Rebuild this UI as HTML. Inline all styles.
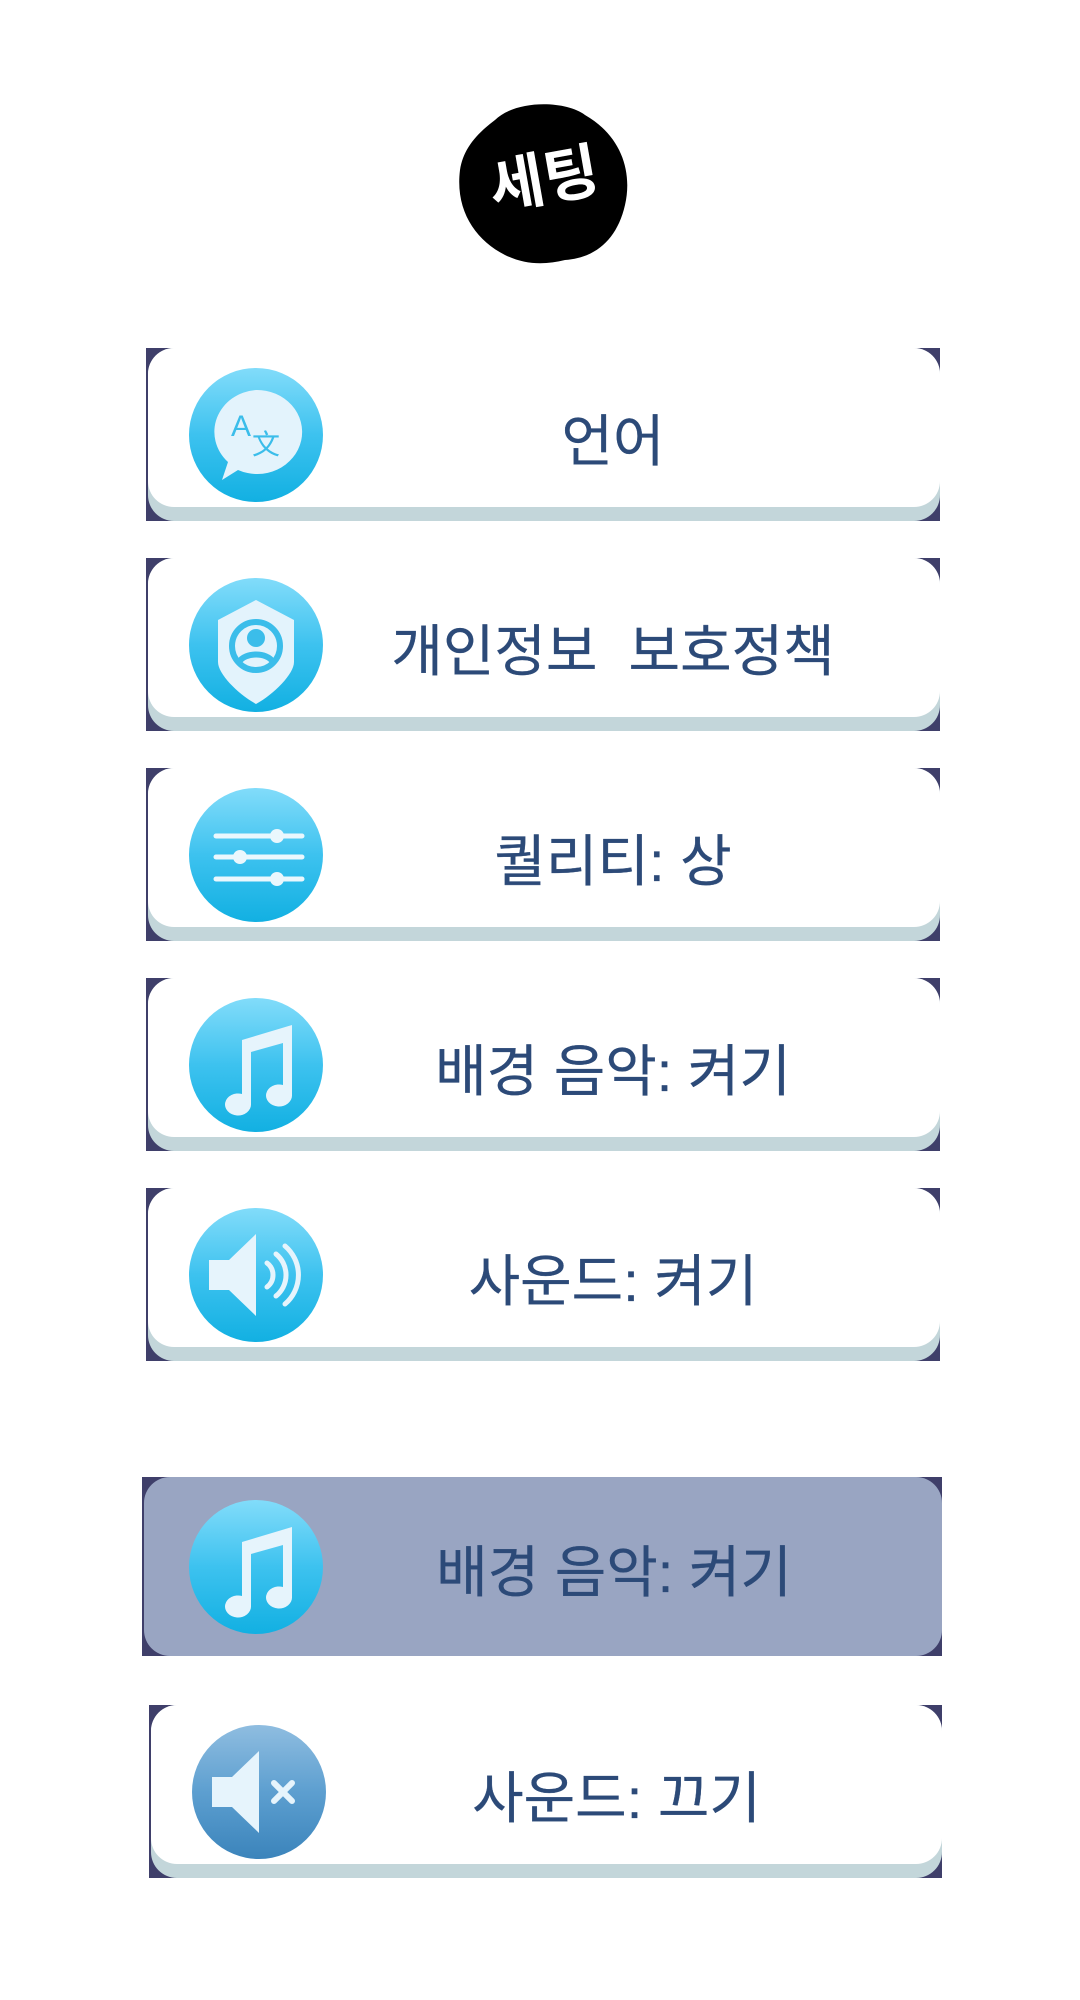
<!DOCTYPE html>
<html><head><meta charset="utf-8"><style>
html,body{margin:0;padding:0;background:#fff;width:1080px;height:2000px;overflow:hidden;position:relative;font-family:"Liberation Sans","Noto Sans CJK KR",sans-serif}
.btn{position:absolute;left:146px;width:794px;height:173px;background:#3f3f6a}
.btn .face{position:absolute;left:2px;top:0;right:0;bottom:0;background:#c3d6da;border-radius:26px}
.btn .face:before{content:"";position:absolute;left:0;right:0;top:0;bottom:14px;background:#fff;border-radius:26px}
.btn.hl .face{background:#99a5c2}
.btn.hl .face:before{display:none}
.ic{position:absolute;left:43px;top:20px;width:134px;height:134px;border-radius:50%;background:linear-gradient(#82dcfa,#3dc2ef 50%,#12b0e2)}
.ic svg{position:absolute;left:0;top:0;width:134px;height:134px}
.ic.mute{background:linear-gradient(#8fbde0,#5d9fd0 50%,#3b84bb)}
.t{position:absolute;left:140px;right:0;top:14px;height:160px;line-height:160px;text-align:center;font-size:56px;color:#2c4a78;-webkit-text-stroke:0.3px #2c4a78}
</style></head><body>
<svg style="position:absolute;left:455px;top:100px" width="180" height="165" viewBox="0 0 180 165">
<path d="M40 20 C60 0 110 0 130 15 C165 35 178 70 170 105 C162 140 140 158 110 160 C90 165 70 165 50 155 C20 140 0 110 5 70 C8 50 20 35 40 20Z" fill="#000"/>
<text x="90" y="100" text-anchor="middle" font-family="'Noto Sans CJK KR',sans-serif" font-weight="bold" font-size="60" fill="#fff" transform="rotate(-10 90 85)">세팅</text>
</svg>

<div class="btn" style="top:348px"><div class="face"></div>
<div class="ic"><svg viewBox="0 0 134 134"><path d="M67 22a45 42 0 1 1 -18 80l-16 10 6-18a45 42 0 0 1 28-72z" fill="#e3f3fc"/><text x="42" y="68" font-size="30" fill="#3bbdea" font-family="Liberation Sans">A</text><text x="63" y="86" font-size="28" fill="#3bbdea" font-family="Noto Sans CJK SC">文</text></svg></div>
<div class="t">언어</div></div>

<div class="btn" style="top:558px"><div class="face"></div>
<div class="ic"><svg viewBox="0 0 134 134"><path d="M67 22l38 20v42c0 12-20 32-38 42-18-10-38-30-38-42V42z" fill="#e3f3fc"/><circle cx="67" cy="68" r="24" fill="none" stroke="#3bbdea" stroke-width="6"/><circle cx="67" cy="60" r="9" fill="#3bbdea"/><path d="M50 84c6-10 28-10 34 0" stroke="#3bbdea" stroke-width="6" fill="none"/></svg></div>
<div class="t">개인정보 &nbsp;보호정책</div></div>

<div class="btn" style="top:768px"><div class="face"></div>
<div class="ic"><svg viewBox="0 0 134 134" stroke="#eaf7fd" stroke-width="5" stroke-linecap="round" fill="#eaf7fd"><line x1="27" y1="48" x2="113" y2="48"/><line x1="27" y1="69" x2="113" y2="69"/><line x1="27" y1="91" x2="113" y2="91"/><circle cx="88" cy="48" r="7" stroke="none"/><circle cx="51" cy="69" r="7" stroke="none"/><circle cx="88" cy="91" r="7" stroke="none"/></svg></div>
<div class="t">퀄리티: 상</div></div>

<div class="btn" style="top:978px"><div class="face"></div>
<div class="ic"><svg viewBox="0 0 134 134"><path d="M53 42l50-15v70a13 11 0 1 1 -9-10V45l-32 9v52a13 11 0 1 1 -9-10z" fill="#e6f4fc"/></svg></div>
<div class="t">배경 음악: 켜기</div></div>

<div class="btn" style="top:1188px"><div class="face"></div>
<div class="ic"><svg viewBox="0 0 134 134"><path d="M20 52h20l27-26v82l-27-26H20z" fill="#e6f4fc"/><path d="M78 55a15 15 0 0 1 0 24M87 46a27 27 0 0 1 0 42M96 38a38 38 0 0 1 0 58" stroke="#e6f4fc" stroke-width="5" fill="none" stroke-linecap="round"/></svg></div>
<div class="t">사운드: 켜기</div></div>

<div class="btn hl" style="top:1477px;left:142px;width:800px;height:179px"><div class="face"></div>
<div class="ic" style="left:47px;top:23px"><svg viewBox="0 0 134 134"><path d="M53 42l50-15v70a13 11 0 1 1 -9-10V45l-32 9v52a13 11 0 1 1 -9-10z" fill="#e6f4fc"/></svg></div>
<div class="t" style="left:144px;height:175px;line-height:175px;top:8px">배경 음악: 켜기</div></div>

<div class="btn" style="top:1705px;left:149px;width:793px"><div class="face"></div>
<div class="ic mute"><svg viewBox="0 0 134 134"><path d="M20 52h20l27-26v82l-27-26H20z" fill="#e6f4fc"/><path d="M82 58l18 18M100 58l-18 18" stroke="#e6f4fc" stroke-width="6" stroke-linecap="round"/></svg></div>
<div class="t" style="left:142px">사운드: 끄기</div></div>
</body></html>
